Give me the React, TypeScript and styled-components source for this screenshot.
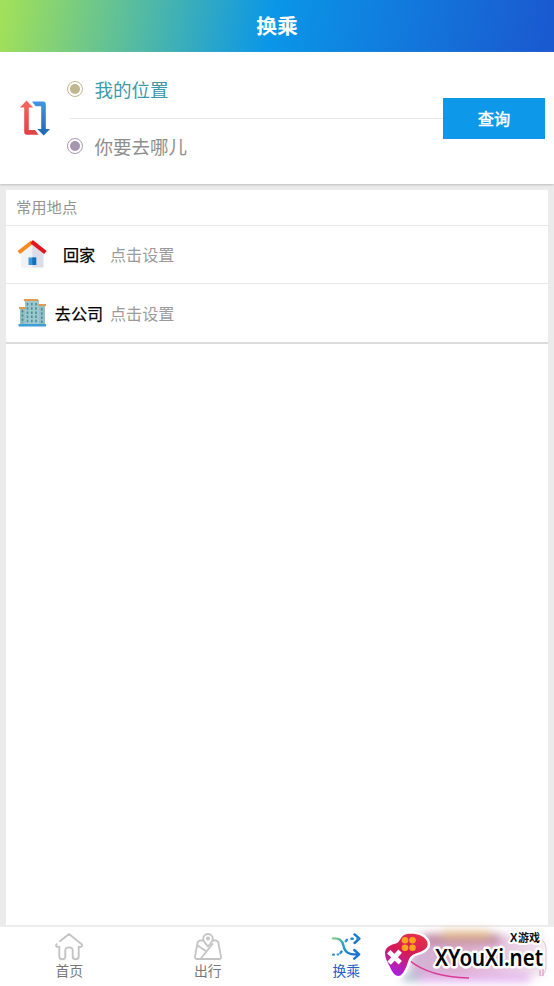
import React from "react";
import styled, { createGlobalStyle } from "styled-components";

const GlobalStyle = createGlobalStyle`
  * { box-sizing: border-box; }
  body { margin: 0; background: #ebebeb; font-family: "Noto Sans CJK SC", sans-serif; }
  svg { display: block; flex: none; }
`;

const Screen = styled.div`
  position: relative;
  display: flex;
  flex-direction: column;
  width: 554px;
  height: 986px;
  overflow: hidden;
  background: #ebebeb;
`;

const Header = styled.header`
  display: flex;
  flex: none;
  align-items: center;
  justify-content: center;
  height: 52px;
  background: linear-gradient(100deg, #a1e05a 1%, #0a96e8 49%, #1a5ad0 98%);
  color: #fff;
  font-size: 20.8px;
  font-weight: 700;
  line-height: 50px;
  padding-bottom: 2px;
`;

const SearchPanel = styled.section`
  display: flex;
  flex: none;
  align-items: center;
  height: 132px;
  padding: 0 9px 0 20px;
  background: #fff;
  box-shadow: 0 1px 2px #bdbdbd;
`;

const Fields = styled.div`
  flex: 1;
  margin-left: 17px;
`;

const Field = styled.div<{ $color: string }>`
  display: flex;
  align-items: center;
  height: 56px;
  padding-bottom: 1px;
  gap: 11.5px;
  color: ${(p) => p.$color};
  font-size: 18.5px;
  line-height: 27px;
`;

const Divider = styled.div`
  height: 1px;
  margin-left: 3px;
  background: #e6e6e6;
`;

const Dot = styled.span<{ $color: string }>`
  display: flex;
  align-items: center;
  justify-content: center;
  width: 16px;
  height: 16px;
  border: 1px solid ${(p) => p.$color};
  border-radius: 50%;
  &::before {
    content: "";
    width: 10px;
    height: 10px;
    border-radius: 50%;
    background: ${(p) => p.$color};
  }
`;

const SearchButton = styled.button`
  width: 102px;
  height: 41px;
  padding: 0;
  border: 0;
  background: #0d98e9;
  color: #fff;
  font: 400 16.2px/41px "Noto Sans CJK SC", sans-serif;
  -webkit-text-stroke: 0.5px #fff;
`;

const Places = styled.section`
  flex: none;
  margin: 6px 6px 0;
  background: #fff;
  border-bottom: 2px solid #dcdcdc;
`;

const PlacesTitle = styled.h2`
  height: 35px;
  margin: 0;
  padding-left: 10px;
  color: #949494;
  font-size: 15.3px;
  font-weight: 400;
  line-height: 33px;
`;

const PlaceRow = styled.div<{ $height: number }>`
  display: flex;
  align-items: center;
  height: ${(p) => p.$height}px;
  padding: 0 0 1px 11px;
  border-top: 1px solid #e9e9e9;
  font-size: 16.1px;
`;

const PlaceName = styled.span`
  width: 62px;
  color: #000;
  text-align: center;
  -webkit-text-stroke: 0.25px #000;
`;

const PlaceHint = styled.span`
  color: #9b9b9b;
`;

const Content = styled.main`
  flex: 1;
  margin: 0 6px;
  background: #fff;
`;

const TabBar = styled.nav`
  display: grid;
  flex: none;
  grid-template-columns: repeat(4, 1fr);
  height: 61px;
  border-top: 2px solid #ededed;
  background: #fff;
`;

const Tab = styled.div<{ $active?: boolean }>`
  display: flex;
  flex-direction: column;
  align-items: center;
  padding-top: 5px;
  color: ${(p) => (p.$active ? "#2561c5" : "#777")};
  font-size: 13.8px;
  line-height: 18px;
`;

const Watermark = styled.div`
  position: absolute;
  left: 380px;
  top: 922px;
  width: 174px;
  height: 64px;
`;

const SwapIcon = () => (
  <svg width="30" height="36" viewBox="0 0 30 36">
    <defs>
      <linearGradient id="swapRed" x1="0" y1="0" x2="0" y2="1">
        <stop offset="0" stopColor="#f5685c" /><stop offset="1" stopColor="#df4148" />
      </linearGradient>
      <linearGradient id="swapBlue" x1="0" y1="0" x2="0" y2="1">
        <stop offset="0" stopColor="#4295e7" /><stop offset="1" stopColor="#1e68b4" />
      </linearGradient>
    </defs>
    <path d="M6.5 0.5 13 7.5H8.8V30H15L18.6 34.8H7Q4.2 34.8 4.2 32V7.5H0Z" fill="url(#swapRed)" />
    <path d="M12 1.5H23Q25.8 1.5 25.8 4.3V29H30L23.7 35.5 17.3 29H21.2V6.3H15.7Z" fill="url(#swapBlue)" />
  </svg>
);

const HouseIcon = () => (
  <svg width="31" height="30" viewBox="0 0 31 30">
    <path d="M4 11 15.2 3.5V28.5H4Z" fill="#f1f2f6" />
    <path d="M15.2 3.5 26.5 11V28.5H15.2Z" fill="#dcdde6" />
    <path d="M1.8 13.5 15.2 3" stroke="#f58a20" strokeWidth="4" />
    <path d="m14.6 2.6 13.8 10.9" stroke="#e3141d" strokeWidth="4" />
    <path d="M11.5 18.5h7.7v7.5h-7.7z" fill="#3897da" />
    <path d="M15.3 18.5h3.9v7.5h-3.9z" fill="#176db5" />
  </svg>
);

const OfficeIcon = () => (
  <svg width="31" height="30" viewBox="0 0 31 30">
    <path d="M3 10h6v17H3zM22 7h6v20h-6z" fill="#91bfc4" />
    <path d="M8 2h14v25H8z" fill="#9bcace" />
    <path d="M2 9h7v2H2zM7 1h14v2H7zM21 6h8v2h-8z" fill="#df9c54" />
    <path d="M10.5 5v20M14.8 5v20M19 5v20M5.5 12v13M24.8 10v15" stroke="#4f8d9c" strokeWidth="1.7" strokeDasharray="2.5 1.7" />
    <path d="M1.5 26h27.5v2.5H1.5z" fill="#3d9ed5" />
  </svg>
);

const HomeTabIcon = () => (
  <svg width="30" height="29" viewBox="0 0 30 29" fill="none" stroke="#c4c4c4" strokeWidth="1.9" strokeLinecap="round" strokeLinejoin="round">
    <path d="M6 9.2 15 2l13 10.4c.9 2-1 3-3.3 2.3v9.5q0 3-3 3t-3-3v-5.5q0-3.3-3.7-3.3t-3.7 3.3v5.5q0 3-3 3t-3-3v-9.5c-3 .6-4-.8-2.6-2.5" />
  </svg>
);

const MapTabIcon = () => (
  <svg width="30" height="29" viewBox="0 0 30 29" fill="none" stroke="#c4c4c4" strokeWidth="1.8" strokeLinecap="round" strokeLinejoin="round">
    <path d="M10.2 8.5H6.8L4.7 10 2 24.5Q1.7 27 4 27h22q2.5 0 2-2.4L25.2 10l-2-1.5H20" />
    <path d="M15 14.5C10.8 10 10.2 8.5 10.2 6.8a4.8 4.8 0 0 1 9.6 0c0 1.7-.6 3.2-4.8 7.7Z" />
    <circle cx="15" cy="6.5" r="1.2" />
    <path d="m4.5 13.5 8 5.2M19.5 12 7.8 26.5" />
  </svg>
);

const TransferTabIcon = () => (
  <svg width="30" height="29" viewBox="0 0 30 29" fill="none" strokeWidth="2.4" strokeLinecap="round" strokeLinejoin="round">
    <defs>
      <linearGradient id="route" gradientUnits="userSpaceOnUse" x1="1" y1="5" x2="27" y2="24">
        <stop offset="0" stopColor="#92d174" /><stop offset=".45" stopColor="#249fcb" /><stop offset="1" stopColor="#1765cd" />
      </linearGradient>
    </defs>
    <path d="M2 6.4c6.8-.2 9.2 1.8 10.5 7.3 1.4 6.8 5.2 9 14.8 8.7" stroke="url(#route)" />
    <path d="m23.3 18 4.8 4.4-4.8 4.3M23.6 2.4l4.8 4.3-4.8 4.3" stroke="#1975d2" />
    <path d="M14.8 9.2 16 7.8M20.4 6.8h1.4M26.5 6.7h.8M10.5 19.5l-1 1.4M2.2 22.6h.6" stroke="#258bd6" />
    <path d="M6.8 22.4h.2" stroke="#379fc6" />
  </svg>
);

const BrandWatermark = () => (
  <Watermark>
    <svg width="174" height="64" viewBox="0 0 174 64">
      <defs>
        <filter id="cloud" x="-20%" y="-50%" width="140%" height="200%"><feGaussianBlur stdDeviation="4" /></filter>
        <linearGradient id="pad" x1=".7" y1="0" x2=".3" y2="1">
          <stop offset="0" stopColor="#e3304a" /><stop offset=".45" stopColor="#d61b55" /><stop offset="1" stopColor="#a722e6" />
        </linearGradient>
        <linearGradient id="haze">
          <stop offset="0" stopColor="#c7a8cf" /><stop offset=".35" stopColor="#d9a0c4" /><stop offset=".7" stopColor="#e3bddd" /><stop offset="1" stopColor="#f0e0ec" />
        </linearGradient>
      </defs>
      <g filter="url(#cloud)">
        <rect x="30" y="13" width="134" height="42" rx="8" fill="url(#haze)" opacity=".85" />
        <path d="M45 12h75v11H45z" fill="#c08aa4" />
        <path d="M62 9h48v8H62z" fill="#e0b888" />
        <path d="M38 53h112v7H38z" fill="#e3b2f0" />
        <path d="M23 52h17v7H23z" fill="#a8b9cd" />
      </g>
      <path d="M156 16q10 2 10 11v19q0 5-5 8" fill="none" stroke="#d8cdd6" strokeWidth="1" />
      <path d="M29 38q20 17 60 18" fill="none" stroke="#dc3a94" strokeWidth="1.6" />
      <path d="M160 48v6M163 47v7" stroke="#d987b6" strokeWidth="1" />
      <path d="M16 21.5C21 20 20 13 27 12c8-1 18 1 20.5 8.5 1 5-3 8-9 10-6 2-8 3-10 8-2 6-5 15-10 15.500-4 0-7-5-9-10C7 39 5 36 5 31c0-5 5-8.500 11-9.500Z" fill="url(#pad)" stroke="#fff" strokeWidth="5" paintOrder="stroke" strokeLinejoin="round" />
      <g fill="#fba319"><circle cx="25" cy="18.200" r="3.300" /><circle cx="32.500" cy="18.200" r="3.300" /><circle cx="25" cy="25.700" r="3.300" /><circle cx="32.500" cy="25.700" r="3.300" /></g>
      <path d="m10.500 31.500 8 7.500M18.500 31 10.800 39.300" stroke="#fff" strokeWidth="4.800" strokeLinecap="square" />
      <g stroke="#fff" strokeWidth="4" strokeLinejoin="round" paintOrder="stroke" fill="#111" fontWeight="700">
        <text x="130" y="20" fontFamily="Open Sans, sans-serif" fontSize="11.500">X</text>
        <text x="138" y="20" fontFamily="Noto Sans CJK SC, sans-serif" fontSize="11">游戏</text>
      </g>
      <text x="55" y="44" fontFamily="Noto Sans, sans-serif" fontSize="23.500" fontWeight="600" textLength="108" lengthAdjust="spacingAndGlyphs" stroke="#fff" strokeWidth="5" strokeLinejoin="round" paintOrder="stroke" fill="#050505">XYouXi.net</text>
    </svg>
  </Watermark>
);

export default function App() {
  return (
    <>
      <GlobalStyle />
      <Screen>
        <Header>换乘</Header>
        <SearchPanel>
          <SwapIcon />
          <Fields>
            <Field $color="#3c9aab"><Dot $color="#c0b78f" />我的位置</Field>
            <Divider />
            <Field $color="#8e8e8e"><Dot $color="#a797af" />你要去哪儿</Field>
          </Fields>
          <SearchButton>查询</SearchButton>
        </SearchPanel>
        <Places>
          <PlacesTitle>常用地点</PlacesTitle>
          <PlaceRow $height={58}><HouseIcon /><PlaceName>回家</PlaceName><PlaceHint>点击设置</PlaceHint></PlaceRow>
          <PlaceRow $height={59}><OfficeIcon /><PlaceName>去公司</PlaceName><PlaceHint>点击设置</PlaceHint></PlaceRow>
        </Places>
        <Content />
        <TabBar>
          <Tab><HomeTabIcon />首页</Tab>
          <Tab><MapTabIcon />出行</Tab>
          <Tab $active><TransferTabIcon />换乘</Tab>
          <Tab />
        </TabBar>
        <BrandWatermark />
      </Screen>
    </>
  );
}
